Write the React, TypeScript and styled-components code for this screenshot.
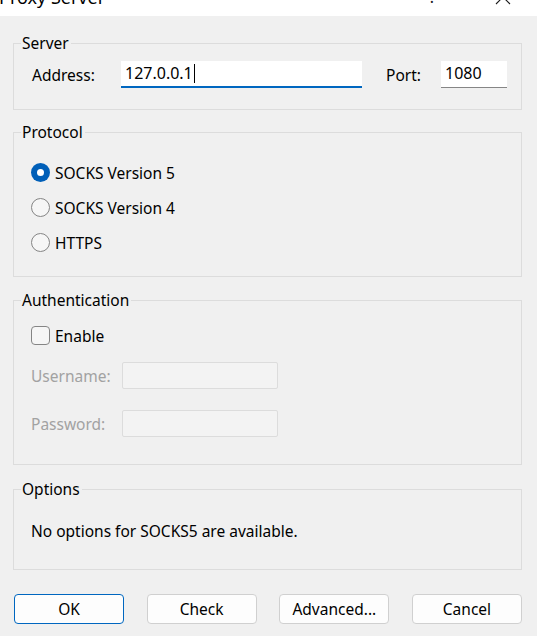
import React from "react";
import styled, { createGlobalStyle, css } from "styled-components";

const Global = createGlobalStyle`
  html, body { margin: 0; padding: 0; background: #f0f0f0; }
  body { font-family: "Noto Sans", "Open Sans", sans-serif; color: #000; }
  * { box-sizing: border-box; }
`;

const Window = styled.div`
  width: 537px;
  height: 636px;
  background: #f0f0f0;
  overflow: hidden;
  display: flex;
  flex-direction: column;
`;

const TitleBar = styled.div`
  height: 16px;
  background: #ffffff;
  display: flex;
  align-items: flex-start;
  overflow: hidden;
  flex-shrink: 0;
`;

const TitleText = styled.span`
  font-size: 18px;
  line-height: 18px;
  margin-top: -12px;
  margin-left: -1px;
  white-space: nowrap;
`;

const HelpGlyph = styled.span`
  margin-left: auto;
  font-size: 16px;
  line-height: 16px;
  margin-top: -11px;
  color: #1a1a1a;
`;

const CloseIcon = styled.svg`
  width: 16px;
  height: 16px;
  margin-top: -11px;
  margin-left: 59px;
  margin-right: 26px;
`;

const Body = styled.div`
  display: flex;
  flex-direction: column;
  padding: 17px 15px 0 13px;
`;

const Group = styled.fieldset<{ $mt: number }>`
  margin: ${(p) => p.$mt}px 0 0 0;
  padding: 0;
  border: 1px solid #dcdcdc;
  min-width: 0;
`;

const Legend = styled.legend`
  font-size: 15.5px;
  line-height: 20px;
  height: 20px;
  padding: 0 2px 0 1px;
  margin-left: 7px;
`;

const ServerRow = styled.div`
  display: flex;
  align-items: center;
  padding: 8px 0 21px 18px;
`;

const Label = styled.span<{ $w?: number; $disabled?: boolean; $ml?: number }>`
  font-size: 15.5px;
  line-height: 20px;
  white-space: nowrap;
  ${(p) => p.$w !== undefined && css`width: ${p.$w}px;`}
  ${(p) => p.$ml !== undefined && css`margin-left: ${p.$ml}px;`}
  color: ${(p) => (p.$disabled ? "#a2a2a2" : "#000")};
  flex-shrink: 0;
`;

const TextField = styled.div<{ $w: number; $focused?: boolean }>`
  width: ${(p) => p.$w}px;
  height: 27px;
  background: #ffffff;
  display: flex;
  align-items: center;
  padding-left: 4px;
  font-size: 16px;
  border-bottom: ${(p) => (p.$focused ? "2px solid #0067c0" : "1px solid #868686")};
  padding-bottom: ${(p) => (p.$focused ? "1px" : "2px")};
  flex-shrink: 0;
`;

const Caret = styled.span`
  display: inline-block;
  width: 1px;
  height: 19px;
  background: #000;
  margin-left: 1px;
`;

const DisabledField = styled.div`
  width: 156px;
  height: 27px;
  background: #f3f3f3;
  border: 1px solid #dcdcdc;
  border-radius: 2px;
  flex-shrink: 0;
`;

const RadioList = styled.div`
  display: flex;
  flex-direction: column;
  padding: 13px 0 16px 17px;
`;

const OptionRow = styled.div<{ $h: number }>`
  height: ${(p) => p.$h}px;
  display: flex;
  align-items: center;
  gap: 5px;
`;

const RadioCircle = styled.span<{ $checked?: boolean }>`
  width: 19px;
  height: 19px;
  border-radius: 50%;
  flex-shrink: 0;
  display: flex;
  align-items: center;
  justify-content: center;
  ${(p) =>
    p.$checked
      ? css`
          background: #005fb8;
          &::after {
            content: "";
            width: 7px;
            height: 7px;
            border-radius: 50%;
            background: #ffffff;
          }
        `
      : css`
          background: #f6f6f6;
          border: 1px solid #858585;
        `}
`;

const CheckBox = styled.span`
  width: 19px;
  height: 19px;
  border-radius: 4px;
  border: 1px solid #858585;
  background: #f6f6f6;
  flex-shrink: 0;
`;

const AuthBody = styled.div`
  display: flex;
  flex-direction: column;
  padding: 16px 0 27px 17px;
`;

const FieldRow = styled.div<{ $mt: number }>`
  display: flex;
  align-items: center;
  margin-top: ${(p) => p.$mt}px;
`;

const OptionsBody = styled.div`
  padding: 21px 0 27px 17px;
`;

const ButtonBar = styled.div`
  display: flex;
  justify-content: space-between;
  margin-top: 24px;
  padding-left: 1px;
`;

const Button = styled.button<{ $default?: boolean }>`
  width: 110px;
  height: 30px;
  border-radius: 4px;
  background: #fdfdfd;
  border: 1px solid ${(p) => (p.$default ? "#0067c0" : "#d0d0d0")};
  font-family: "Noto Sans", "Open Sans", sans-serif;
  font-size: 15.5px;
  color: #000;
  padding: 0;
`;

const protocols = [
  { label: "SOCKS Version 5", checked: true },
  { label: "SOCKS Version 4", checked: false },
  { label: "HTTPS", checked: false },
];

export default function App() {
  return (
    <>
      <Global />
      <Window>
        <TitleBar>
          <TitleText>Proxy Server</TitleText>
          <HelpGlyph>?</HelpGlyph>
          <CloseIcon viewBox="0 0 16 16">
            <path d="M1 1 L15 15 M15 1 L1 15" stroke="#1a1a1a" strokeWidth="1.1" fill="none" />
          </CloseIcon>
        </TitleBar>
        <Body>
          <Group $mt={0}>
            <Legend>Server</Legend>
            <ServerRow>
              <Label $w={89}>Address:</Label>
              <TextField $w={241} $focused>
                127.0.0.1
                <Caret />
              </TextField>
              <Label $ml={24} $w={55}>Port:</Label>
              <TextField $w={66}>1080</TextField>
            </ServerRow>
          </Group>

          <Group $mt={12}>
            <Legend>Protocol</Legend>
            <RadioList>
              {protocols.map((p) => (
                <OptionRow key={p.label} $h={35}>
                  <RadioCircle $checked={p.checked} />
                  <Label>{p.label}</Label>
                </OptionRow>
              ))}
            </RadioList>
          </Group>

          <Group $mt={13}>
            <Legend>Authentication</Legend>
            <AuthBody>
              <OptionRow $h={19}>
                <CheckBox />
                <Label>Enable</Label>
              </OptionRow>
              <FieldRow $mt={17}>
                <Label $w={91} $disabled>
                  Username:
                </Label>
                <DisabledField />
              </FieldRow>
              <FieldRow $mt={21}>
                <Label $w={91} $disabled>
                  Password:
                </Label>
                <DisabledField />
              </FieldRow>
            </AuthBody>
          </Group>

          <Group $mt={14}>
            <Legend>Options</Legend>
            <OptionsBody>
              <Label>No options for SOCKS5 are available.</Label>
            </OptionsBody>
          </Group>

          <ButtonBar>
            <Button $default>OK</Button>
            <Button>Check</Button>
            <Button>Advanced...</Button>
            <Button>Cancel</Button>
          </ButtonBar>
        </Body>
      </Window>
    </>
  );
}
